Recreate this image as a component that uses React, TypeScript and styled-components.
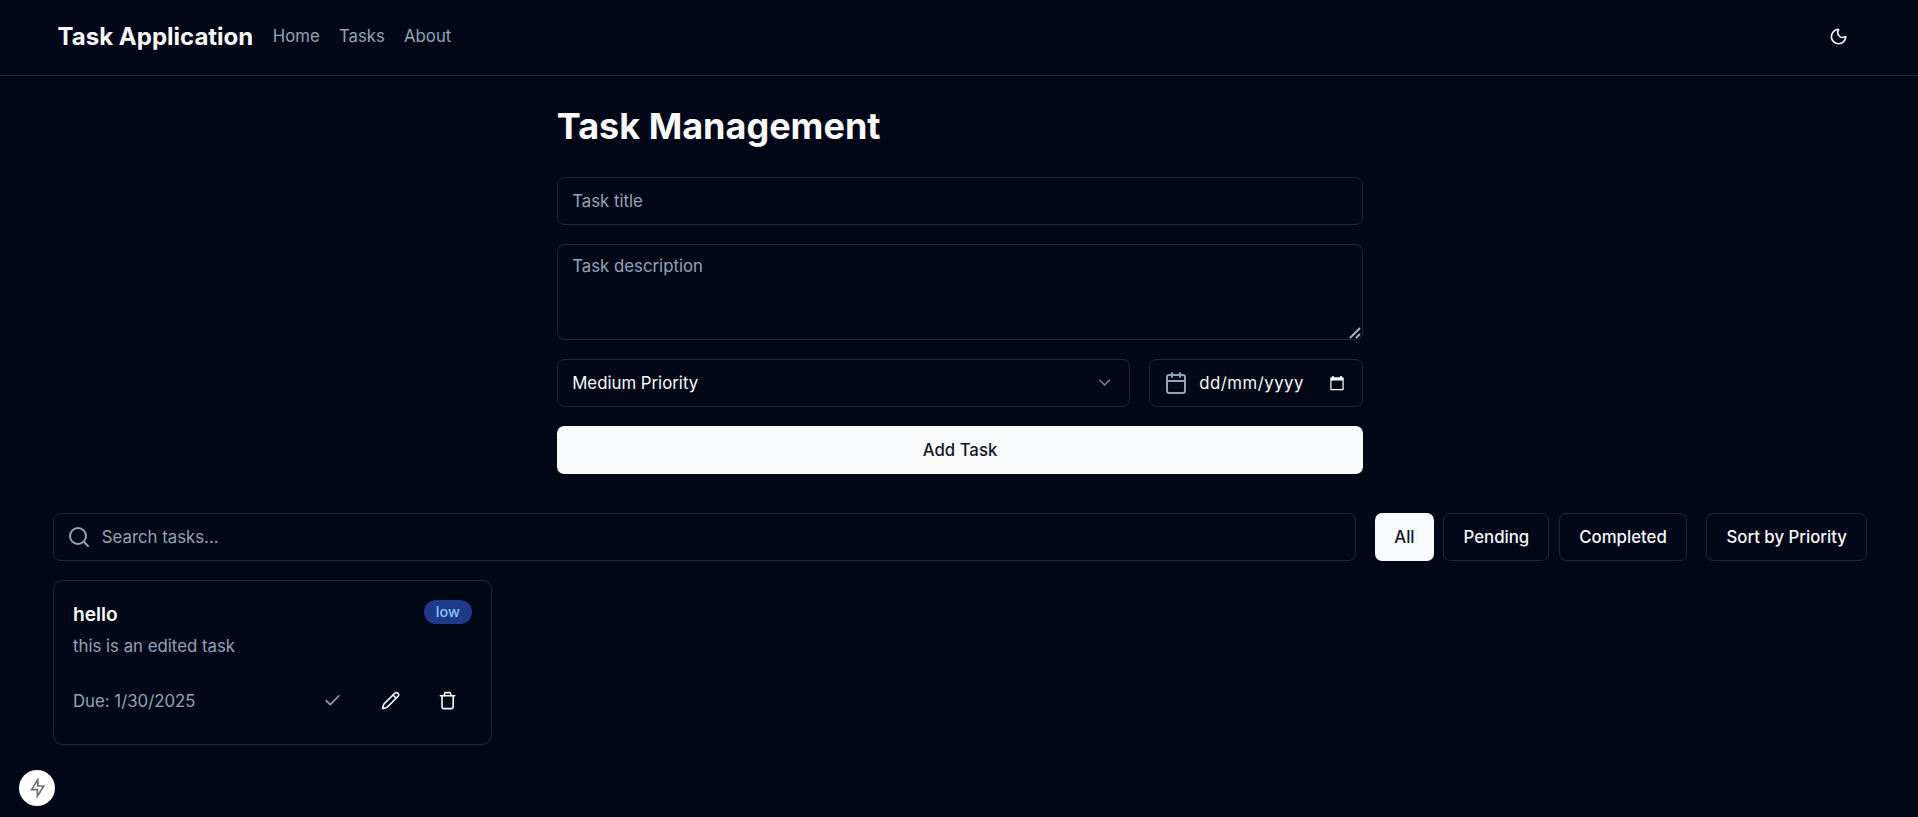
import React from "react";
import styled, { createGlobalStyle, css } from "styled-components";
import { Calendar, Check, ChevronDown, Moon, Pencil, Search, Trash } from "lucide-react";

const color = {
  bg: "#020817",
  fg: "#f8fafc",
  muted: "#94a3b8",
  border: "#1e293b",
  dark: "#0f172a",
};

const GlobalStyle = createGlobalStyle`
  *, *::before, *::after { box-sizing: border-box; }
  html { color-scheme: dark; overflow: hidden; background: ${color.bg}; }
  body {
    margin: 0;
    background: ${color.bg};
    color: ${color.fg};
    font-family: Inter, "Liberation Sans", sans-serif;
    font-size: 16.8px;
    line-height: 24px;
  }
  h1, h3, p { margin: 0; }
  button, input, textarea { font: inherit; }
`;

const Page = styled.div`
  width: 1920px;
  height: 817px;
  overflow: hidden;
`;

const Header = styled.header`
  display: flex;
  align-items: center;
  height: 76px;
  padding: 0 57.6px 3px;
  border-bottom: 1px solid ${color.border};
`;

const Brand = styled.a`
  padding-top: 1.6px;
  font-size: 24px;
  line-height: 33.6px;
  font-weight: 700;
`;

const Nav = styled.nav`
  display: flex;
  gap: 19.2px;
  margin-left: 19.4px;
  color: ${color.muted};
`;

const IconButton = styled.button<{ $muted?: boolean }>`
  display: inline-flex;
  align-items: center;
  justify-content: center;
  width: 48px;
  height: 48px;
  padding: 0;
  border: 0;
  background: transparent;
  color: ${(p) => (p.$muted ? color.muted : color.fg)};
`;

const HeaderEnd = styled.div`
  margin-left: auto;
  padding-top: 1.2px;
  display: flex;
`;

const FormSection = styled.section`
  display: flex;
  flex-direction: column;
  width: 806.4px;
  margin: 28.7px auto 38.4px;
`;

const Title = styled.h1`
  font-size: 36px;
  line-height: 43.2px;
  font-weight: 700;
  margin-bottom: 28.8px;
`;

const Form = styled.div`
  display: flex;
  flex-direction: column;
  gap: 19.2px;
`;

const field = css`
  border: 1px solid ${color.border};
  border-radius: 7.2px;
  background: ${color.bg};
  color: ${color.fg};
`;

const Input = styled.input`
  ${field}
  display: block;
  width: 100%;
  height: 48px;
  padding: 9.6px 14.4px;
  outline: none;
  &::placeholder { color: ${color.muted}; opacity: 1; }
`;

const TextAreaWrap = styled.div`
  position: relative;
`;

const TextArea = styled.textarea`
  ${field}
  display: block;
  width: 100%;
  height: 96px;
  padding: 9.6px 14.4px;
  outline: none;
  resize: none;
  &::placeholder { color: ${color.muted}; opacity: 1; }
`;

const Grip = styled.svg`
  position: absolute;
  right: 2px;
  bottom: 1px;
`;

const FormRow = styled.div`
  display: flex;
  gap: 19.2px;
`;

const Select = styled.button`
  ${field}
  display: flex;
  flex: 1;
  align-items: center;
  justify-content: space-between;
  height: 48px;
  padding: 0 14.4px;
  svg { opacity: 0.5; }
`;

const DateField = styled.div`
  ${field}
  display: flex;
  align-items: center;
  width: 214.4px;
  height: 48px;
  padding: 0 18px 0 14.4px;
`;

const DateText = styled.span`
  margin-left: 11px;
  flex: 1;
  letter-spacing: 0.5px;
`;

const Button = styled.button<{ $solid?: boolean }>`
  height: 48px;
  padding: 0 19.2px;
  border: 1px solid ${color.border};
  border-width: ${(p) => (p.$solid ? 0 : 1)}px;
  border-radius: 7.2px;
  background: ${(p) => (p.$solid ? color.fg : color.bg)};
  color: ${(p) => (p.$solid ? color.dark : color.fg)};
  font-weight: 500;
  white-space: nowrap;
`;

const Listing = styled.section`
  width: 1814.4px;
  margin: 0 auto;
`;

const Toolbar = styled.div`
  display: flex;
  gap: 19.2px;
  margin-bottom: 19.2px;
`;

const SearchField = styled.div`
  ${field}
  display: flex;
  flex: 1;
  align-items: center;
  gap: 11px;
  height: 48px;
  padding: 0 13px;
  color: ${color.muted};
`;

const Filters = styled.div`
  display: flex;
  gap: 9.6px;
`;

const Grid = styled.div`
  display: grid;
  grid-template-columns: repeat(4, 1fr);
  gap: 19.2px;
`;

const Card = styled.article`
  padding: 19.2px;
  border: 1px solid ${color.border};
  border-radius: 9.6px;
`;

const CardTop = styled.div`
  display: flex;
  justify-content: space-between;
  align-items: flex-start;
`;

const CardTitle = styled.h3`
  font-size: 19.2px;
  line-height: 28.8px;
  font-weight: 600;
`;

const CardText = styled.p`
  margin-top: 4.8px;
  color: ${color.muted};
`;

const Badge = styled.span`
  padding: 2.4px 12px;
  border-radius: 12px;
  background: #1e3a8a;
  color: #93c5fd;
  font-size: 14.4px;
  line-height: 19.2px;
  font-weight: 500;
`;

const CardBottom = styled.div`
  display: flex;
  justify-content: space-between;
  align-items: center;
  margin-top: 19.2px;
  color: ${color.muted};
`;

const Actions = styled.div`
  display: flex;
  gap: 9.6px;
`;

const DevBadge = styled.div`
  position: fixed;
  left: 19px;
  bottom: 11px;
  display: flex;
  align-items: center;
  justify-content: center;
  width: 36px;
  height: 36px;
  border-radius: 50%;
  background: #fff;
`;

const PickerIcon = () => (
  <svg width="14" height="15" viewBox="0 0 14 15" fill="none">
    <path d="M2.2 0h1.6v1.2h6.4V0h1.6v1.2h.9q1 0 1 1V13.2q0 1-1 1H1.3q-1 0-1-1V2.2q0-1 1-1h.9zM1.5 4.5v8.4h11V4.5z" fill="#fff" fillRule="evenodd" />
  </svg>
);

const Bolt = () => (
  <svg width="16" height="20" viewBox="0 0 16 20" fill="none" stroke="#707070" strokeWidth="1.7">
    <path d="M8.8 1.6 2.6 11.6h5.8v6.6L14.8 8H8.8z" />
  </svg>
);

const ResizeGrip = () => (
  <Grip width="12" height="12" viewBox="0 0 12 12" stroke="#b0b0b4" strokeWidth="1.9">
    <path d="M1 11 11 1M7 11l4-4" />
  </Grip>
);

export default function App() {
  return (
    <Page>
      <GlobalStyle />
      <Header>
        <Brand>Task Application</Brand>
        <Nav>
          <a>Home</a>
          <a>Tasks</a>
          <a>About</a>
        </Nav>
        <HeaderEnd>
          <IconButton aria-label="Toggle theme"><Moon size={19.2} /></IconButton>
        </HeaderEnd>
      </Header>
      <FormSection>
        <Title>Task Management</Title>
        <Form>
          <Input placeholder="Task title" />
          <TextAreaWrap>
            <TextArea placeholder="Task description" />
            <ResizeGrip />
          </TextAreaWrap>
          <FormRow>
            <Select>
              Medium Priority
              <ChevronDown size={19.2} />
            </Select>
            <DateField>
              <Calendar size={24} color={color.muted} />
              <DateText>dd/mm/yyyy</DateText>
              <PickerIcon />
            </DateField>
          </FormRow>
          <Button $solid>Add Task</Button>
        </Form>
      </FormSection>
      <Listing>
        <Toolbar>
          <SearchField>
            <Search size={24} />
            <span>Search tasks...</span>
          </SearchField>
          <Filters>
            <Button $solid>All</Button>
            <Button>Pending</Button>
            <Button>Completed</Button>
          </Filters>
          <Button>Sort by Priority</Button>
        </Toolbar>
        <Grid>
          <Card>
            <CardTop>
              <CardTitle>hello</CardTitle>
              <Badge>low</Badge>
            </CardTop>
            <CardText>this is an edited task</CardText>
            <CardBottom>
              <span>Due: 1/30/2025</span>
              <Actions>
                <IconButton $muted aria-label="Complete"><Check size={19.2} /></IconButton>
                <IconButton aria-label="Edit"><Pencil size={19.2} /></IconButton>
                <IconButton aria-label="Delete"><Trash size={19.2} /></IconButton>
              </Actions>
            </CardBottom>
          </Card>
        </Grid>
      </Listing>
      <DevBadge><Bolt /></DevBadge>
    </Page>
  );
}
